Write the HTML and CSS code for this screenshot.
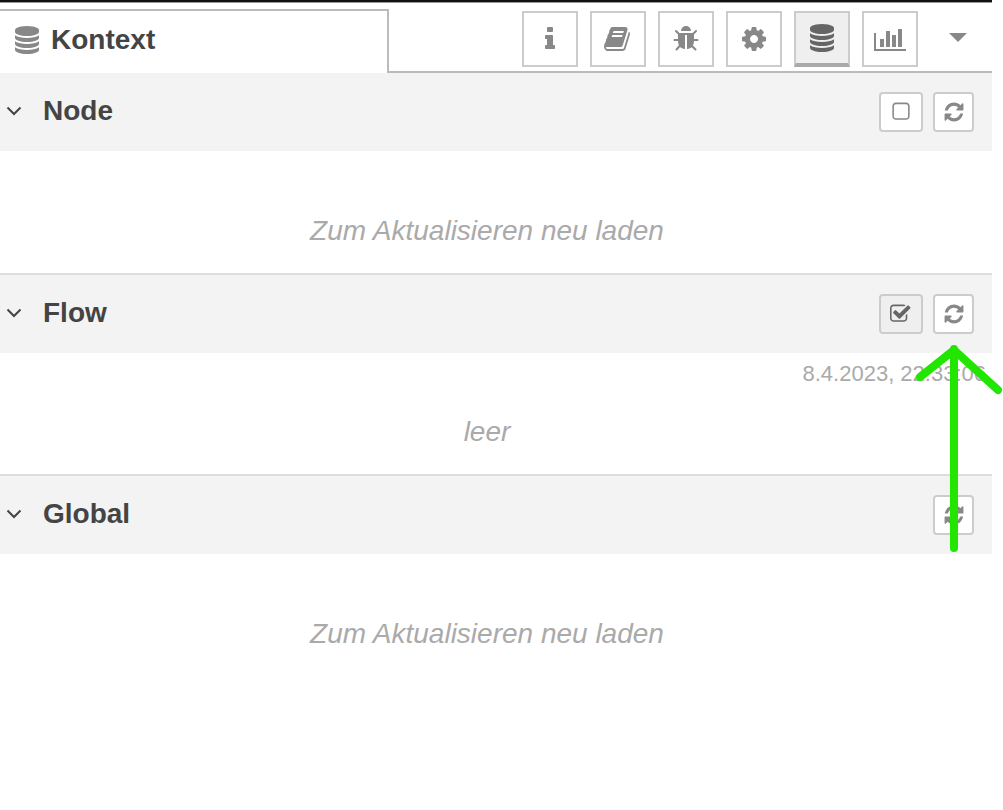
FILE: index.html
```html
<!DOCTYPE html>
<html lang="de">
<head>
<meta charset="utf-8">
<title>Kontext</title>
<link rel="stylesheet" href="styles.css">
</head>
<body>
<svg width="0" height="0" class="defs">
  <symbol id="i-db" viewBox="0 0 1792 1792"><path d="M896 768q237 0 443-43t325-127v170q0 69-103 128t-280 93.5-385 34.5-385-34.5-280-93.5-103-128v-170q119 84 325 127t443 43zm0 768q237 0 443-43t325-127v170q0 69-103 128t-280 93.5-385 34.5-385-34.5-280-93.5-103-128v-170q119 84 325 127t443 43zm0-384q237 0 443-43t325-127v170q0 69-103 128t-280 93.5-385 34.5-385-34.5-280-93.5-103-128v-170q119 84 325 127t443 43zm0-1152q208 0 385 34.5t280 93.5 103 128v128q0 69-103 128t-280 93.5-385 34.5-385-34.5-280-93.5-103-128v-128q0-69 103-128t280-93.5 385-34.5z"/></symbol>
  <symbol id="i-refresh" viewBox="0 0 1792 1792"><path d="M1639 1056q0 5-1 7-64 268-268 434.5t-478 166.5q-146 0-282.5-55t-243.5-157l-129 129q-19 19-45 19t-45-19-19-45v-448q0-26 19-45t45-19h448q26 0 45 19t19 45-19 45l-137 137q71 66 161 102t187 36q134 0 250-65t186-179q11-17 53-117 8-23 30-23h192q13 0 22.5 9.5t9.5 22.5zm25-800v448q0 26-19 45t-45 19h-448q-26 0-45-19t-19-45 19-45l138-138q-148-137-349-137-134 0-250 65t-186 179q-11 17-53 117-8 23-30 23h-199q-13 0-22.5-9.5t-9.5-22.5v-7q65-268 270-434.5t480-166.5q146 0 284 55.5t245 156.5l130-129q19-19 45-19t45 19 19 45z"/></symbol>
</svg>

<div class="panel">
  <header class="tabbar">
    <div class="tab">
      <svg class="db-icon tab-icon"><use href="#i-db"/></svg>
      <span class="tab-label">Kontext</span>
    </div>
    <div class="tools">
      <button class="tool"><svg class="tool-icon" viewBox="0 0 1792 1792"><path d="M1216 1344v128q0 26-19 45t-45 19h-512q-26 0-45-19t-19-45v-128q0-26 19-45t45-19h64v-384h-64q-26 0-45-19t-19-45v-128q0-26 19-45t45-19h384q26 0 45 19t19 45v576h64q26 0 45 19t19 45zm-128-1152v192q0 26-19 45t-45 19h-256q-26 0-45-19t-19-45v-192q0-26 19-45t45-19h256q26 0 45 19t19 45z"/></svg></button>
      <button class="tool"><svg class="tool-icon" viewBox="0 0 1792 1792"><path d="M1639 478q40 57 18 129l-275 906q-19 64-76.5 107.5t-122.5 43.5h-923q-77 0-148.5-53.5t-99.5-131.5q-24-67-2-127 0-4 3-27t4-37q1-8-3-21.5t-3-19.5q2-11 8-21t16.5-23.5 16.5-23.5q23-38 45-91.5t30-91.5q3-10 .5-30t-.5-28q3-11 17-28t17-23q21-36 42-92t25-90q1-9-2.5-32t.5-28q4-13 22-30.5t22-22.5q19-26 42.5-84.5t27.5-96.5q1-8-3-25.5t-2-26.5q2-8 9-18t18-23 17-21q8-12 16.5-30.5t15-35 16-36 19.5-32 26.5-23.5 36-11.5 47.5 5.5l-1 3q38-9 51-9h761q74 0 114 56t18 130l-274 906q-36 119-71.5 153.5t-128.5 34.5h-869q-27 0-38 15-11 16-1 43 24 70 144 70h923q29 0 56-15.5t35-41.5l300-987q7-22 5-57 38 15 59 43zm-1064 2q-4 13 2 22.5t20 9.5h608q13 0 25.5-9.5t16.5-22.5l21-64q4-13-2-22.5t-20-9.5h-608q-13 0-25.5 9.5t-16.5 22.5zm-83 256q-4 13 2 22.5t20 9.5h608q13 0 25.5-9.5t16.5-22.5l21-64q4-13-2-22.5t-20-9.5h-608q-13 0-25.5 9.5t-16.5 22.5z"/></svg></button>
      <button class="tool"><svg class="tool-icon" viewBox="0 0 1792 1792"><path d="M1696 960q0 26-19 45t-45 19h-224q0 171-67 290l208 209q19 19 19 45t-19 45q-18 19-45 19t-45-19l-198-197q-5 5-15 13t-42 28.5-65 36.5-82 29-97 13v-896h-128v896q-51 0-101.5-13.5t-87-33-66-39-43.5-32.5l-15-14-183 207q-20 21-48 21-24 0-43-16-19-18-20.5-44.5t15.5-46.5l202-227q-58-114-58-274h-224q-26 0-45-19t-19-45 19-45 45-19h224v-294l-173-173q-19-19-19-45t19-45 45-19 45 19l173 173h844l173-173q19-19 45-19t45 19 19 45-19 45l-173 173v294h224q26 0 45 19t19 45zm-480-576h-640q0-133 93.5-226.5t226.5-93.5 226.5 93.5 93.5 226.5z"/></svg></button>
      <button class="tool"><svg class="tool-icon" viewBox="0 0 1792 1792"><path d="M1152 896q0-106-75-181t-181-75-181 75-75 181 75 181 181 75 181-75 75-181zm512-109v222q0 12-8 23t-20 13l-185 28q-19 54-39 91 35 50 107 138 10 12 10 25t-9 23q-27 37-99 108t-94 71q-12 0-26-9l-138-108q-44 23-91 38-16 136-29 186-7 28-36 28h-222q-14 0-24.5-8.5t-11.5-21.5l-28-184q-49-16-90-37l-141 107q-10 9-25 9-14 0-25-11-126-114-165-168-7-10-7-23 0-12 8-23 15-21 51-66.5t54-70.5q-27-50-41-99l-183-27q-13-2-21-12.5t-8-23.5v-222q0-12 8-23t19-13l186-28q14-46 39-92-40-57-107-138-10-12-10-24 0-10 9-23 26-36 98.5-107.5t94.5-71.5q13 0 26 10l138 107q44-23 91-38 16-136 29-186 7-28 36-28h222q14 0 24.5 8.5t11.5 21.5l28 184q49 16 90 37l142-107q9-9 24-9 13 0 25 10 129 119 165 170 7 8 7 22 0 12-8 23-15 21-51 66.5t-54 70.5q26 50 41 98l183 28q13 2 21 12.5t8 23.5z"/></svg></button>
      <button class="tool tool-active"><svg class="db-icon tool-db"><use href="#i-db"/></svg></button>
      <button class="tool"><svg class="tool-icon tool-icon-wide" viewBox="0 0 2048 1792"><path d="M640 896v512h-256v-512h256zm384-512v1024h-256v-1024h256zm1024 1152v128h-2048v-1152h128v1024h1920zm-640-896v768h-256v-768h256zm384-384v1152h-256v-1152h256z"/></svg></button>
      <span class="caret"></span>
    </div>
  </header>

  <section class="section">
    <div class="sec-head">
      <svg class="chevron" viewBox="0 0 16 10"><path d="M1.5 1.5 8 8l6.5-6.5"/></svg>
      <h2 class="sec-title">Node</h2>
      <div class="sec-actions">
        <button class="mini"><svg class="mini-icon mini-icon-box" viewBox="0 0 1792 1792"><path d="M1312 256h-832q-66 0-113 47t-47 113v832q0 66 47 113t113 47h832q66 0 113-47t47-113v-832q0-66-47-113t-113-47zm288 160v832q0 119-84.5 203.5t-203.5 84.5h-832q-119 0-203.5-84.5t-84.5-203.5v-832q0-119 84.5-203.5t203.5-84.5h832q119 0 203.5 84.5t84.5 203.5z"/></svg></button>
        <button class="mini mini-refresh"><svg class="mini-icon"><use href="#i-refresh"/></svg></button>
      </div>
    </div>
    <div class="sec-body"><p class="placeholder">Zum Aktualisieren neu laden</p></div>
  </section>

  <section class="section">
    <div class="sec-head">
      <svg class="chevron" viewBox="0 0 16 10"><path d="M1.5 1.5 8 8l6.5-6.5"/></svg>
      <h2 class="sec-title">Flow</h2>
      <div class="sec-actions">
        <button class="mini mini-on"><svg class="mini-icon" viewBox="0 0 1792 1792"><path d="M1408 930v318q0 119-84.5 203.5t-203.5 84.5h-832q-119 0-203.5-84.5t-84.5-203.5v-832q0-119 84.5-203.5t203.5-84.5h832q63 0 117 25 15 7 18 23 3 17-9 29l-49 49q-10 10-23 10-3 0-9-2-23-6-45-6h-832q-66 0-113 47t-47 113v832q0 66 47 113t113 47h832q66 0 113-47t47-113v-254q0-13 9-22l64-64q10-10 23-10 6 0 12 3 20 8 20 29zm231-489l-814 814q-24 24-57 24t-57-24l-430-430q-24-24-24-57t24-57l110-110q24-24 57-24t57 24l263 263 647-647q24-24 57-24t57 24l110 110q24 24 24 57t-24 57z"/></svg></button>
        <button class="mini mini-refresh"><svg class="mini-icon"><use href="#i-refresh"/></svg></button>
      </div>
    </div>
    <div class="sec-body sec-body-dated">
      <div class="stamp">8.4.2023, 22:33:06</div>
      <p class="placeholder">leer</p>
    </div>
  </section>

  <section class="section section-last">
    <div class="sec-head">
      <svg class="chevron" viewBox="0 0 16 10"><path d="M1.5 1.5 8 8l6.5-6.5"/></svg>
      <h2 class="sec-title">Global</h2>
      <div class="sec-actions">
        <button class="mini mini-refresh"><svg class="mini-icon"><use href="#i-refresh"/></svg></button>
      </div>
    </div>
    <div class="sec-body"><p class="placeholder">Zum Aktualisieren neu laden</p></div>
  </section>
</div>

<svg class="annotation" viewBox="0 0 1003 810" width="1003" height="810">
  <path d="M954 548V349M920 377 954 350 998 390"/>
</svg>
</body>
</html>
```

FILE: styles.css
```css
* { box-sizing: border-box; }

html, body {
  margin: 0;
  padding: 0;
  background: #fff;
  height: 100%;
  overflow: hidden;
}

body {
  position: relative;
  font-family: "Liberation Sans", Arial, sans-serif;
  color: #444;
}

.defs { position: absolute; }

.panel {
  width: 992px;
  border-top: 2px solid #111;
}

.tabbar {
  display: flex;
  justify-content: space-between;
  height: 71px;
  padding-top: 7px;
  border-bottom: 2px solid #bbb;
  box-shadow: inset 0 1px #999;
}

.tab {
  display: flex;
  align-items: center;
  gap: 10px;
  width: 389px;
  height: 64px;
  padding: 0 0 4px 13px;
  border-top: 2px solid #bbb;
  border-right: 2px solid #bbb;
  background: #fff;
}

.db-icon { fill: #888; }

.tab-icon {
  width: 28px;
  height: 28px;
}

.tab-label {
  font-size: 28px;
  font-weight: 700;
  color: #444;
}

.tools {
  display: flex;
  align-items: flex-start;
  gap: 12px;
  padding-top: 2px;
  padding-right: 25px;
}

.tool {
  display: flex;
  align-items: center;
  justify-content: center;
  width: 56px;
  height: 56px;
  padding: 0;
  border: 2px solid #ccc;
  background: #fff;
}

.tool-icon {
  width: 28px;
  height: 28px;
  fill: #888;
}

.tool-icon-wide { width: 32px; }

.tool-db {
  width: 28px;
  height: 28px;
  fill: #666;
}

.tool-active {
  background: #efefef;
  border-bottom: 4px solid #aaa;
}

.caret {
  width: 0;
  height: 0;
  margin: 22px 0 0 19px;
  border-left: 9px solid transparent;
  border-right: 9px solid transparent;
  border-top: 9px solid #888;
}

.section {
  border-bottom: 2px solid #ddd;
  height: 201.5px;
}

.section-last { border-bottom: 0; }

.sec-head {
  display: flex;
  align-items: center;
  height: 78px;
  padding: 0 18px 2px 6px;
  background: #f3f3f3;
}

.chevron {
  width: 16px;
  height: 10px;
  margin-right: 21px;
  fill: none;
  stroke: #444;
  stroke-width: 2;
}

.sec-title {
  flex: 1;
  margin: 0;
  font-size: 28px;
  font-weight: 700;
  color: #444;
}

.sec-actions {
  display: flex;
  gap: 10px;
  padding-top: 2px;
}

.mini {
  display: flex;
  align-items: center;
  justify-content: center;
  width: 44px;
  height: 40px;
  padding: 0;
  border: 2px solid #ccc;
  border-radius: 4px;
  background: #fff;
}

.mini-refresh { width: 41px; }

.mini-on { background: #efefef; }

.mini-icon {
  width: 22px;
  height: 22px;
  fill: #888;
}

.mini-on .mini-icon { fill: #666; }

.sec-body {
  padding-top: 64px;
}

.sec-body-dated {
  position: relative;
  padding-top: 63px;
}

.stamp {
  position: absolute;
  top: 8px;
  right: 6px;
  font-size: 22px;
  color: #aaa;
}

.placeholder {
  margin: 0;
  padding-right: 18px;
  font-size: 28px;
  font-style: italic;
  text-align: center;
  color: #aaa;
}

.annotation {
  position: absolute;
  top: 0;
  left: 0;
  pointer-events: none;
  fill: none;
  stroke: #22e600;
  stroke-width: 8;
  stroke-linecap: round;
  stroke-linejoin: round;
}
```
